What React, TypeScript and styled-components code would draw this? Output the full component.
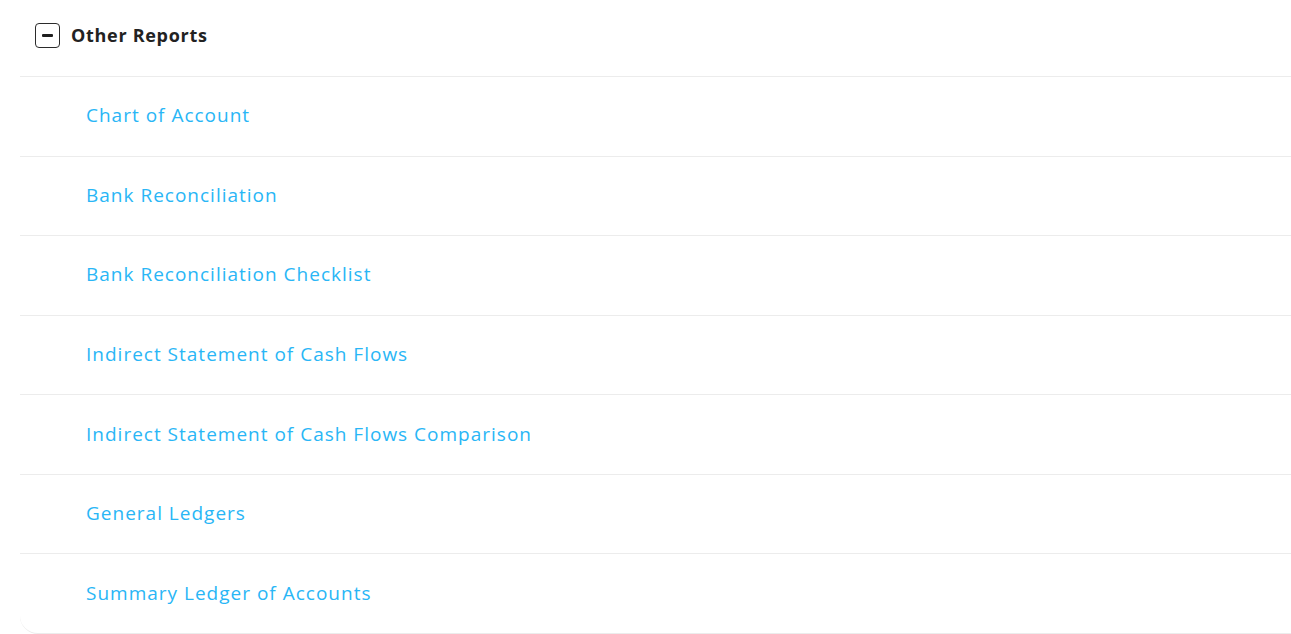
import React from "react";
import styled, { createGlobalStyle } from "styled-components";

const Global = createGlobalStyle`
  html, body { margin: 0; padding: 0; background: #ffffff; }
  body { font-family: "Open Sans", "Liberation Sans", sans-serif; }
`;

const Page = styled.div`
  padding-left: 20px;
  width: 1271px;
`;

const Header = styled.div`
  display: flex;
  align-items: center;
  gap: 11px;
  height: 71px;
  padding-left: 15px;
  padding-bottom: 5px;
  border-bottom: 1px solid #ececec;
`;

const ToggleBox = styled.button`
  width: 25px;
  height: 25px;
  box-sizing: border-box;
  border: 1.5px solid #2b2b2b;
  border-radius: 4px;
  background: #fff;
  padding: 0;
  display: flex;
  align-items: center;
  justify-content: center;
`;

const Minus = styled.span`
  width: 11px;
  height: 3px;
  background: #1f1f1f;
  border-radius: 1px;
`;

const Title = styled.h2`
  margin: 0 0 2px;
  font-size: 18px;
  font-weight: 700;
  color: #222222;
  letter-spacing: 0.7px;
`;

const List = styled.ul`
  list-style: none;
  margin: 0;
  padding: 0;
`;

const Row = styled.li<{ $last?: boolean }>`
  box-sizing: border-box;
  height: 79.57px;
  display: flex;
  align-items: center;
  padding: 0 0 2px 66px;
  border-bottom: 1px solid #ececec;
  ${(p) => (p.$last ? "border-bottom-left-radius: 18px;" : "")}
`;

const Link = styled.a`
  font-size: 19px;
  font-weight: 400;
  color: #29b6f6;
  text-decoration: none;
  letter-spacing: 1px;
  cursor: pointer;
`;

const items = [
  "Chart of Account",
  "Bank Reconciliation",
  "Bank Reconciliation Checklist",
  "Indirect Statement of Cash Flows",
  "Indirect Statement of Cash Flows Comparison",
  "General Ledgers",
  "Summary Ledger of Accounts",
];

export default function App() {
  return (
    <>
      <Global />
      <Page>
        <Header>
          <ToggleBox aria-label="collapse">
            <Minus />
          </ToggleBox>
          <Title>Other Reports</Title>
        </Header>
        <List>
          {items.map((t, i) => (
            <Row key={t} $last={i === items.length - 1}>
              <Link>{t}</Link>
            </Row>
          ))}
        </List>
      </Page>
    </>
  );
}
